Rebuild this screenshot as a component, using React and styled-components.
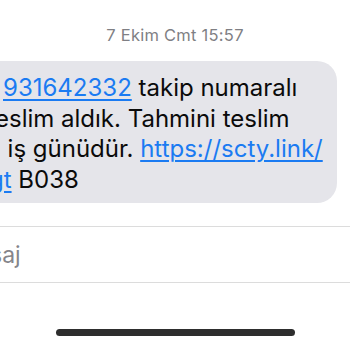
import React from 'react'
import styled, { createGlobalStyle } from 'styled-components'

const GlobalStyle = createGlobalStyle`
  html, body {
    margin: 0;
    padding: 0;
    background: #ffffff;
    overflow: hidden;
  }
  body {
    font-family: Inter, "Liberation Sans", sans-serif;
  }
`

// the screenshot is cropped: each line's start lies partly off the left edge
const lines = [
  { shift: 3, parts: [{ link: true, text: '931642332' }, { text: ' takip numaralı' }] },
  { shift: -5, parts: [{ text: 'eslim aldık. Tahmini teslim' }] },
  { shift: -14, parts: [{ text: '3 iş günüdür. ' }, { link: true, text: 'https://scty.link/' }] },
  { shift: -11, parts: [{ link: true, text: 'gt' }, { text: ' B038' }] },
]

const App = () => (
  <>
    <GlobalStyle />
    <S.Screen>
      <S.DateLabel>7 Ekim Cmt 15:57</S.DateLabel>
      <S.Bubble>
        {lines.map((line, i) => (
          <S.Line key={i} $shift={line.shift}>
            {line.parts.map((p, j) =>
              p.link ? <S.Link key={j}>{p.text}</S.Link> : <span key={j}>{p.text}</span>
            )}
          </S.Line>
        ))}
      </S.Bubble>
      <S.Composer>
        <S.Placeholder>saj</S.Placeholder>
      </S.Composer>
      <S.HomeBar />
    </S.Screen>
  </>
)

export default App

export const S = {}

S.Screen = styled.div`
  width: 350px;
  height: 350px;
  overflow: hidden;
  display: flex;
  flex-direction: column;
  background: #fff;
`

S.DateLabel = styled.div`
  margin-top: 25px;
  text-align: center;
  font-size: 16.5px;
  line-height: 20px;
  color: #7f7f84;
  letter-spacing: 0.25px;
`

S.Bubble = styled.div`
  margin: 16px 13px 0 -60px;
  padding: 12px 0 8px 60px;
  background: #e5e5ea;
  border-radius: 20px;
  overflow: hidden;
`

S.Line = styled.div`
  margin-left: ${p => p.$shift}px;
  white-space: nowrap;
  font-size: 24px;
  line-height: 30.5px;
  color: #0b0b0b;
`

S.Link = styled.span`
  color: #1b7bf2;
  text-decoration: underline;
  text-decoration-thickness: 1.5px;
  text-underline-offset: 3px;
`

S.Composer = styled.div`
  margin: 23px -20px 0 -20px;
  height: 55px;
  border-top: 1px solid #dcdcdc;
  border-bottom: 1px solid #dcdcdc;
  display: flex;
  align-items: center;
`

S.Placeholder = styled.div`
  margin-left: 10px;
  font-size: 23px;
  color: #85858a;
`

S.HomeBar = styled.div`
  margin: 46px auto 0;
  width: 239px;
  height: 7px;
  border-radius: 4px;
  background: #2e2e2e;
`
